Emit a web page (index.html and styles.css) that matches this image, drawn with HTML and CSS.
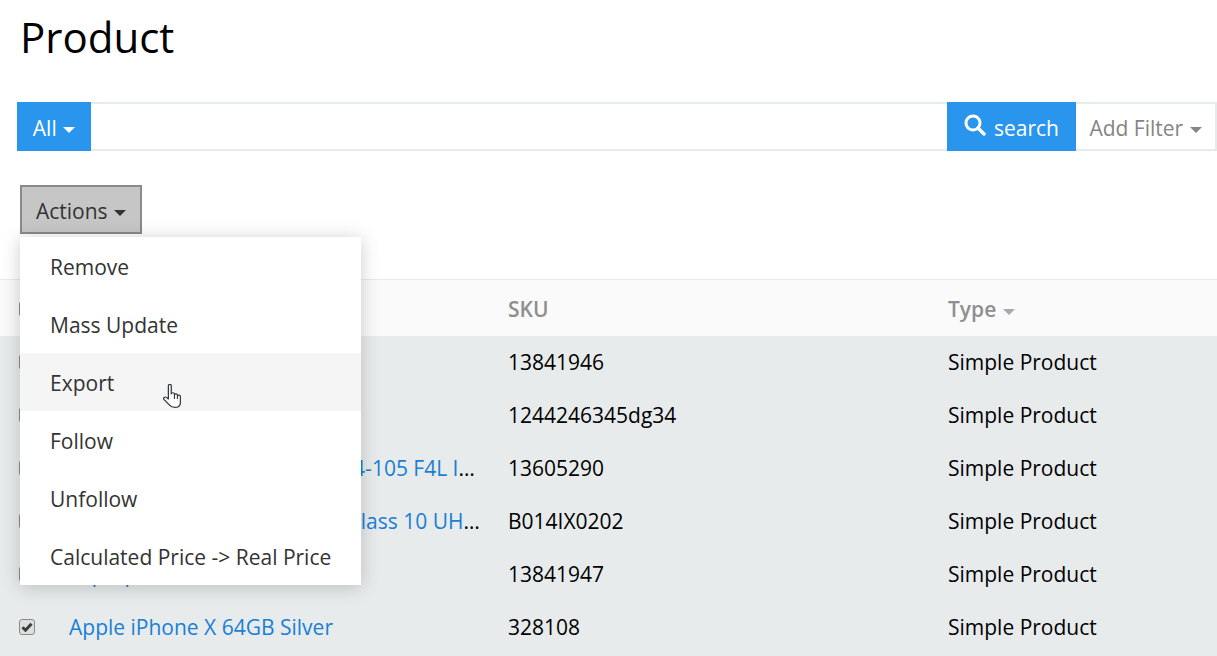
FILE: index.html
```html
<!DOCTYPE html>
<html lang="en">
<head>
<meta charset="utf-8">
<title>Product</title>
<link rel="stylesheet" href="styles.css">
</head>
<body>
<h1 class="title">Product</h1>
<div class="searchbar">
  <button class="btn-primary btn-all">All <span class="caret"></span></button>
  <div class="search-input"></div>
  <button class="btn-primary btn-search">
    <svg class="search-icon" viewBox="0 0 22 22" width="22" height="22"><circle cx="9" cy="9" r="7" fill="none" stroke="#fff" stroke-width="3"/><path d="M14 14l6 6" stroke="#fff" stroke-width="3.4" stroke-linecap="round"/></svg>
    <span>search</span>
  </button>
  <button class="btn-filter">Add Filter <span class="caret"></span></button>
</div>
<div class="actions">
  <button class="btn-actions">Actions <span class="caret"></span></button>
  <ul class="menu">
    <li class="menu-item">Remove</li>
    <li class="menu-item">Mass Update</li>
    <li class="menu-item hover">Export</li>
    <li class="menu-item">Follow</li>
    <li class="menu-item">Unfollow</li>
    <li class="menu-item">Calculated Price -&gt; Real Price</li>
  </ul>
  <svg class="cursor" viewBox="0.8 1.6 15.7 24" width="18" height="24" preserveAspectRatio="none"><path d="M5.5 3.2C5.5 1.6 8 1.6 8 3.2V11.5C8.5 9.8 10.6 10 10.8 11.5V12.5C11.2 11 13.2 11.2 13.4 12.6V13.5C13.8 12.3 16 12.5 16 14V20C16 23 14 25 11 25C8.5 25 7.5 24 6.3 22.4L1.6 17C.6 15.6 2.4 14 3.8 15L5.5 16.6Z" fill="#fff" stroke="#333844" stroke-width="1.1" stroke-linejoin="round"/><path d="M10.8 12.5V16.5M13.4 13.5V16.5" stroke="#333844" stroke-width="1" fill="none"/></svg>
</div>
<div class="grid-wrap">
<table class="grid">
  <colgroup><col class="col-check"><col class="col-name"><col class="col-sku"><col></colgroup>
  <thead>
    <tr>
      <th><span class="check"></span></th>
      <th>Name</th>
      <th>SKU</th>
      <th>Type <span class="caret caret-muted"></span></th>
    </tr>
  </thead>
  <tbody>
    <tr><td><span class="check"></span></td><td class="name"><a href="#">Samsung Galaxy S8</a></td><td>13841946</td><td>Simple Product</td></tr>
    <tr><td><span class="check"></span></td><td class="name"><a href="#">HP Notebook 15</a></td><td>1244246345dg34</td><td>Simple Product</td></tr>
    <tr><td><span class="check"></span></td><td class="name"><a href="#">Canon Standard Zoom EF-S 24-105 F4L IS II USM</a></td><td>13605290</td><td>Simple Product</td></tr>
    <tr><td><span class="check"></span></td><td class="name"><a href="#">SanDisk Ultra 64GB MicroTF Class 10 UHS-I Card</a></td><td>B014IX0202</td><td>Simple Product</td></tr>
    <tr><td><span class="check"></span></td><td class="name"><a href="#">Laptop</a></td><td>13841947</td><td>Simple Product</td></tr>
    <tr><td><span class="check"><svg viewBox="0 0 12 10" width="12" height="10"><path d="M1.5 5.2L4.5 8.2L10.5 1.8" fill="none" stroke="#3c3c3c" stroke-width="3"/></svg></span></td><td class="name"><a href="#">Apple iPhone X 64GB Silver</a></td><td>328108</td><td>Simple Product</td></tr>
  </tbody>
</table>
</div>
</body>
</html>
```

FILE: styles.css
```css
* { box-sizing: border-box; }
html, body { margin: 0; padding: 0; height: 656px; overflow: hidden; }
body { background: #fff; color: #000; font-family: "Open Sans", sans-serif; font-size: 21px; line-height: 28px; }
button { font: inherit; cursor: pointer; }

.title { margin: 0; padding: 8px 0 0 20px; height: 102px; font-size: 42px; line-height: 57px; font-weight: 400; }

.searchbar { display: flex; height: 49px; margin-left: 17px; }
.btn-primary { border: 0; background: #2995ec; color: #fff; padding: 2px 0 0; }
.btn-all { width: 74px; }
.search-input { flex: 1; border: solid #e6ebeb; border-width: 2px 0; }
.btn-search { width: 129px; display: flex; align-items: center; justify-content: center; gap: 8px; }
.search-icon { flex: none; margin-top: -5px; }
.btn-filter { width: 141px; background: #fff; color: #858585; border: solid #e6ebeb; border-width: 2px 2px 2px 0; padding: 2px 0 0; }
.caret { display: inline-block; width: 0; height: 0; vertical-align: middle; margin-left: 1px; border: 6px solid transparent; border-top-color: currentColor; border-bottom-width: 0; }
.caret-muted { color: #aaa; }

.actions { position: relative; height: 128px; padding: 34px 0 0 20px; }
.btn-actions { width: 122px; height: 49px; padding: 2px 0 0; background: #c6c6c6; color: #333; border: 2px solid #8a8a8a; }
.menu { position: absolute; z-index: 2; left: 20px; top: 86px; width: 341px; margin: 0; padding: 0; list-style: none; background: #fff; color: #333; box-shadow: 0 2px 18px rgba(0,0,0,.2); }
.menu-item { height: 58px; padding: 1px 10px 0 30px; line-height: 58px; white-space: nowrap; }
.menu-item.hover { background: #f5f5f5; }
.cursor { position: absolute; z-index: 3; left: 163px; top: 233px; }

.grid-wrap { height: 377px; overflow: hidden; background: #e8ebec; }
.grid { width: 1217px; table-layout: fixed; border-collapse: collapse; }
.col-check { width: 69px; }
.col-name { width: 439px; }
.col-sku { width: 440px; }
.grid th { height: 56px; padding: 3px 0 0; text-align: left; font-weight: 600; color: #8f8f8f; background: #fafafa; border-top: 1px solid #e8ebeb; }
.grid td { height: 53px; padding: 0; }
.grid .name { padding-right: 27px; overflow: hidden; white-space: nowrap; text-overflow: ellipsis; }
.name a { color: #1a7fd4; text-decoration: none; }
.check { display: flex; align-items: center; justify-content: center; width: 16px; height: 16px; margin-left: 19px; background: #dedede; border: 1px solid #8c8c8c; border-radius: 3px; }
```
